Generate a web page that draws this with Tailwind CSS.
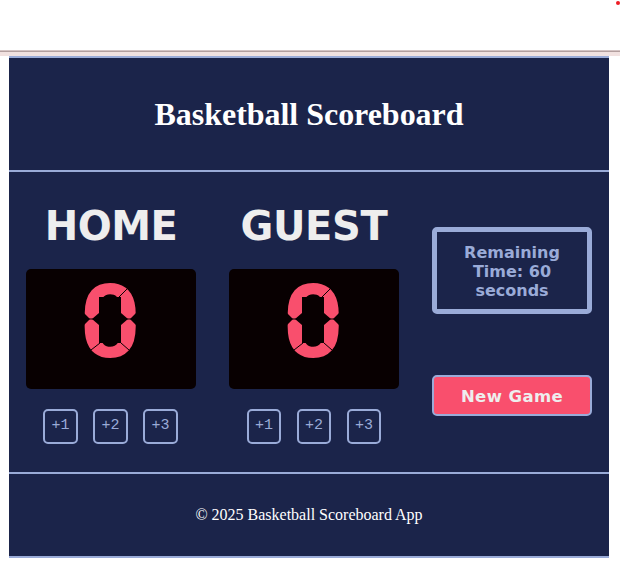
<!DOCTYPE html>
<html lang="en">
<head>
<meta charset="utf-8">
<title>Basketball Scoreboard</title>
<script src="https://cdn.jsdelivr.net/npm/@tailwindcss/browser@4"></script>
</head>
<body class="relative h-[565px] w-[621px] overflow-hidden bg-white">
<div class="h-[50px]"></div>
<div class="h-[6px] w-[620px] border-t border-[#d4c4c4] bg-[#f1e1e0]"><div class="h-px bg-[#b39f9f]"></div></div>
<div class="absolute top-[1px] left-[616px] size-1 rounded-full bg-[#ee1c24]"></div>
<div class="ml-[9px] w-[600px] bg-[#1b244a]">
  <header class="flex h-[116px] items-center justify-center border-y-2 border-[#9aabd8]">
    <h1 class="font-['Liberation_Serif',serif] text-[32px] leading-9 font-bold tracking-[-0.03px] text-white">Basketball Scoreboard</h1>
  </header>
  <main class="flex h-[300px] pl-[17px] font-['DejaVu_Sans',sans-serif]">
    <section class="mr-[33px] w-[170px]">
      <h2 class="mt-[31px] text-center text-[40px] leading-[47px] font-bold tracking-[-0.5px] text-[#eee]">HOME</h2>
      <div class="relative mt-[19px] flex h-[120px] items-center justify-center rounded-[5px] bg-[#080001]">
        <span class="relative -top-[7px] left-[-0.5px] scale-x-[1.04] font-[Roboto,sans-serif] text-[102px] leading-none font-bold text-[#f94f6d]">0</span>
        <svg class="absolute top-[14px] left-[58px]" width="52" height="76" viewBox="0 0 52 76" fill="#080001"><path d="M0 30 6 36 0 42ZM52 30 46 36 52 42ZM15 14H37V30L44 36 37 42V60H15V42L8 36 15 30Z"/><path d="M5 36H9M43 36H47M43 6 35 14M16 60 7 67M37 60 45 67" stroke="#080001"/></svg>
      </div>
      <div class="mt-5 ml-[17px] flex gap-[15px] font-['Liberation_Mono',monospace] text-[15px] text-[#9aabd8]">
        <button class="h-[35px] w-[35px] rounded-[5px] border-2 border-[#9aabd8] pb-px">+1</button>
        <button class="h-[35px] w-[35px] rounded-[5px] border-2 border-[#9aabd8] pb-px">+2</button>
        <button class="h-[35px] w-[35px] rounded-[5px] border-2 border-[#9aabd8] pb-px">+3</button>
      </div>
    </section>
    <section class="mr-[33px] w-[170px]">
      <h2 class="mt-[31px] text-center text-[40px] leading-[47px] font-bold tracking-[-0.3px] text-[#eee]">GUEST</h2>
      <div class="relative mt-[19px] flex h-[120px] items-center justify-center rounded-[5px] bg-[#080001]">
        <span class="relative -top-[7px] left-[-0.5px] scale-x-[1.04] font-[Roboto,sans-serif] text-[102px] leading-none font-bold text-[#f94f6d]">0</span>
        <svg class="absolute top-[14px] left-[58px]" width="52" height="76" viewBox="0 0 52 76" fill="#080001"><path d="M0 30 6 36 0 42ZM52 30 46 36 52 42ZM15 14H37V30L44 36 37 42V60H15V42L8 36 15 30Z"/><path d="M5 36H9M43 36H47M43 6 35 14M16 60 7 67M37 60 45 67" stroke="#080001"/></svg>
      </div>
      <div class="mt-5 ml-[18px] flex gap-4 font-['Liberation_Mono',monospace] text-[15px] text-[#9aabd8]">
        <button class="h-[35px] w-[34px] rounded-[5px] border-2 border-[#9aabd8] pb-px">+1</button>
        <button class="h-[35px] w-[34px] rounded-[5px] border-2 border-[#9aabd8] pb-px">+2</button>
        <button class="h-[35px] w-[34px] rounded-[5px] border-2 border-[#9aabd8] pb-px">+3</button>
      </div>
    </section>
    <section class="w-[160px] pt-[55px]">
      <div class="h-[87px] rounded-[5px] border-5 border-[#9aabd8] pt-[11px] text-center text-[16px] leading-[19px] font-bold text-[#9aabd8]">Remaining<br>Time: 60<br>seconds</div>
      <button class="mt-[61px] h-[41px] w-[160px] rounded-[5px] border-2 border-[#9aabd8] bg-[#f94f6d] pt-[3px] text-[16.5px] font-bold tracking-[0.4px] text-[#eee]">New Game</button>
    </section>
  </main>
  <footer class="flex h-[86px] items-center justify-center border-y-2 border-[#9aabd8]">
    <p class="font-['Liberation_Serif',serif] text-[16px] leading-[18px] text-white">© 2025 Basketball Scoreboard App</p>
  </footer>
</div>
</body>
</html>
